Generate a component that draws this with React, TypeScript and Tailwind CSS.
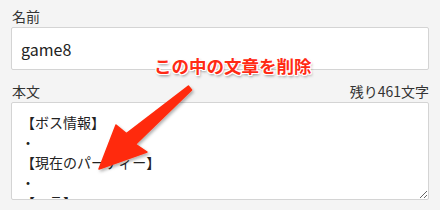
const bodyText = "【ボス情報】\n・\n【現在のパーティー】\n・\n【一言】\n";

export default function App() {
  return (
    <div className="relative w-[440px] h-[210px] overflow-hidden bg-[#f4f4f4] px-[11px] pt-[6px] text-[#333] font-['Noto_Sans_CJK_JP','Noto_Sans',sans-serif]">
      <div className="text-[14px] leading-[20px] pl-px mb-px">名前</div>
      <input
        readOnly
        value="game8"
        className="block w-full h-[43px] bg-white border border-[#d4d4d4] rounded-[2px] px-[9px] text-[16px] text-[#222] outline-none"
      />

      <div className="flex justify-between items-center mt-[11px] mb-px text-[14px] leading-[20px] pl-px">
        <span>本文</span>
        <span>残り461文字</span>
      </div>
      <textarea
        readOnly
        defaultValue={bodyText}
        className="block w-full h-[98px] bg-white border border-[#d4d4d4] rounded-[2px] px-[9px] pt-[9px] text-[14px] leading-[20px] text-[#222] outline-none resize-y overflow-hidden"
      />

      {/* annotation overlay */}
      <svg className="absolute left-0 top-0 pointer-events-none" width="440" height="210" viewBox="0 0 440 210">
        <defs>
          <filter id="sh" x="-20%" y="-20%" width="140%" height="140%">
            <feDropShadow dx="1.5" dy="2" stdDeviation="1.5" floodColor="#000" floodOpacity="0.3" />
          </filter>
        </defs>
        <polygon
          points="188.4,86.1 126.4,133.7 116,125 99,169 147,152 135.6,144.3 191.6,89.9"
          fill="#ff2b0a"
          stroke="#ff2b0a"
          strokeWidth="1.5"
          strokeLinejoin="round"
          filter="url(#sh)"
        />
      </svg>
      <div className="absolute left-[154px] top-[54px] text-[17.5px] leading-[24px] font-bold text-[#ff2a14] [text-shadow:-1px_-1px_0_#fff,1px_-1px_0_#fff,-1px_1px_0_#fff,1px_1px_0_#fff,0_-1px_0_#fff,0_1px_0_#fff,-1px_0_0_#fff,1px_0_0_#fff,1px_2px_3px_rgba(0,0,0,0.45)]">
        この中の文章を削除
      </div>
    </div>
  );
}
